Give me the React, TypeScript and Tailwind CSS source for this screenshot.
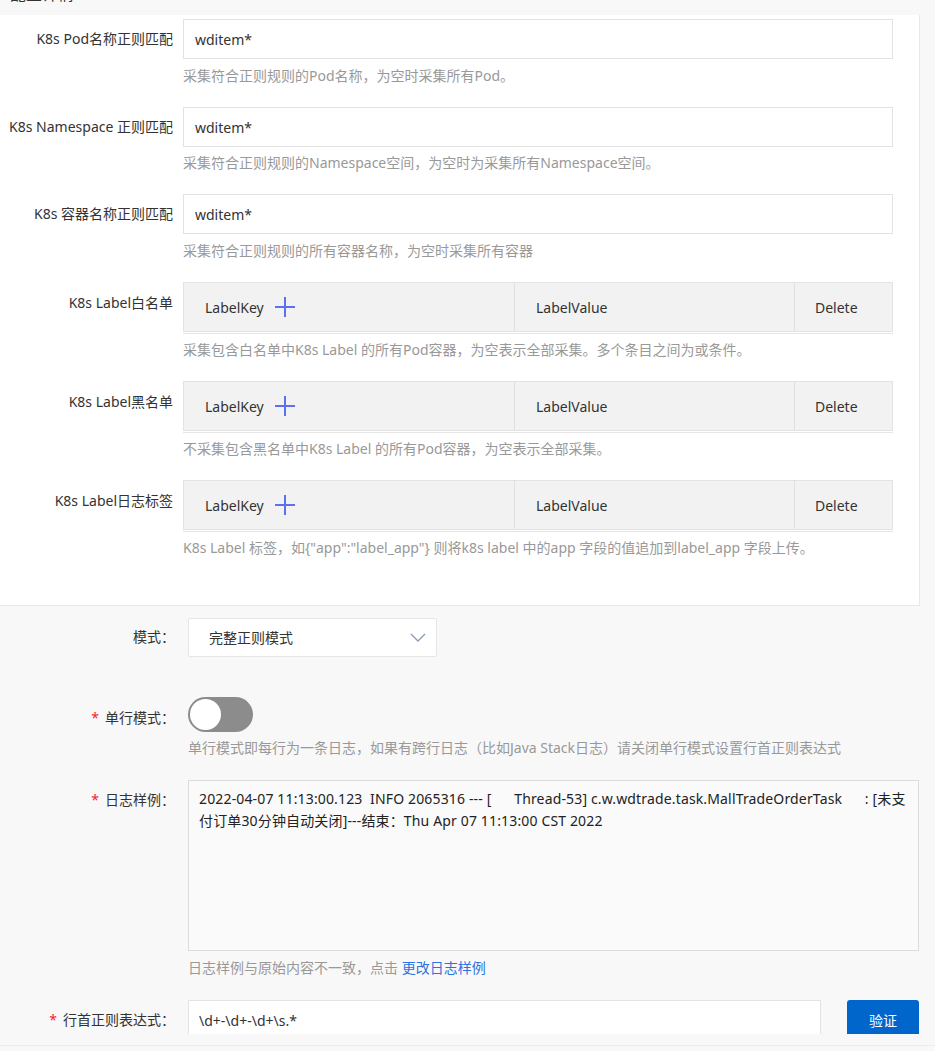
const font = "font-['Noto_Sans','Noto_Sans_CJK_SC',sans-serif]";

type InputRowProps = { label: string; value: string; help: string; helpMt?: string };

function InputRow({ label, value, help, helpMt = "mt-[5px]" }: InputRowProps) {
  return (
    <div className="flex items-start">
      <div className="w-[173px] shrink-0 pt-[9px] text-right text-[14px] leading-[22px] text-[#333]">
        {label}
      </div>
      <div className="ml-[10px] w-[710px]">
        <div className="flex h-[40px] items-center border border-[#e3e3e3] bg-white px-[11px] text-[14px] text-[#333]">
          {value}
        </div>
        <div className={`${helpMt} text-[14px] leading-[22px] text-[#999]`}>{help}</div>
      </div>
    </div>
  );
}

function Plus() {
  return (
    <svg width="22" height="22" viewBox="0 0 22 22" className="ml-[10px]">
      <path d="M11 1v20M1 11h20" stroke="#5b72f0" strokeWidth="2" fill="none" />
    </svg>
  );
}

function LabelTable({ label, help }: { label: string; help: string }) {
  return (
    <div className="flex items-start">
      <div className="w-[173px] shrink-0 pt-[10px] text-right text-[14px] leading-[22px] text-[#333]">
        {label}
      </div>
      <div className="ml-[10px] w-[710px]">
        <div className="flex h-[50px] border border-[#e3e3e3] bg-[#f2f2f2] text-[14px] text-[#333]">
          <div className="flex w-[330px] items-center pl-[21px]">
            LabelKey
            <Plus />
          </div>
          <div className="flex w-[280px] items-center border-l border-[#e0e0e0] pl-[21px]">
            LabelValue
          </div>
          <div className="flex flex-1 items-center border-l border-[#e0e0e0] pl-[20px]">Delete</div>
        </div>
        <div className="mt-px h-px bg-[#e6e6e6]" />
        <div className="mt-[5px] text-[14px] leading-[22px] text-[#999]">{help}</div>
      </div>
    </div>
  );
}

function Label({ text, required, pt }: { text: string; required?: boolean; pt: string }) {
  return (
    <div className={`w-[175px] shrink-0 text-right text-[14px] leading-[22px] text-[#333] ${pt}`}>
      {required && <span className="mr-[6px] text-[#f5222d]">*</span>}
      {text}
    </div>
  );
}

export default function App() {
  return (
    <div className={`h-[1051px] w-[935px] overflow-hidden bg-[#f8f8f8] ${font}`}>
      <div className="h-[1034px] overflow-hidden">
        <div className="h-[15px] overflow-hidden">
          <div className="-mt-[17px] pl-[10px] text-[16px] leading-[22px] text-[#333]">配置详情</div>
        </div>

        <div className="w-[920px] border-r border-b border-[#e8e8e8] bg-white pt-[4px] pb-[46px]">
          <div className="flex flex-col gap-[20px]">
            <InputRow
              label="K8s Pod名称正则匹配"
              value="wditem*"
              help="采集符合正则规则的Pod名称，为空时采集所有Pod。"
              helpMt="mt-[6px]"
            />
            <InputRow
              label="K8s Namespace 正则匹配"
              value="wditem*"
              help="采集符合正则规则的Namespace空间，为空时为采集所有Namespace空间。"
            />
            <InputRow
              label="K8s 容器名称正则匹配"
              value="wditem*"
              help="采集符合正则规则的所有容器名称，为空时采集所有容器"
              helpMt="mt-[6px]"
            />
            <LabelTable label="K8s Label白名单" help="采集包含白名单中K8s Label 的所有Pod容器，为空表示全部采集。多个条目之间为或条件。" />
            <LabelTable label="K8s Label黑名单" help="不采集包含黑名单中K8s Label 的所有Pod容器，为空表示全部采集。" />
            <LabelTable
              label="K8s Label日志标签"
              help={'K8s Label 标签，如{"app":"label_app"} 则将k8s label 中的app 字段的值追加到label_app 字段上传。'}
            />
          </div>
        </div>

        <div className="pt-[12px]">
          <div className="flex items-start">
            <Label text="模式：" pt="pt-[8px]" />
            <div className="ml-[13px] flex h-[39px] w-[249px] items-center justify-between rounded-[2px] border border-[#e6e6e6] bg-white pl-[20px] pr-[10px] text-[14px] text-[#333]">
              完整正则模式
              <svg width="16" height="10" viewBox="0 0 16 10">
                <path d="M1 1l7 7 7-7" stroke="#8a9bb3" strokeWidth="1.3" fill="none" />
              </svg>
            </div>
          </div>

          <div className="mt-[40px] flex items-start">
            <Label text="单行模式：" required pt="pt-[10px]" />
            <div className="ml-[13px]">
              <div className="flex h-[35px] w-[65px] items-center rounded-full bg-[#8c8c8c] pl-[2px]">
                <div className="h-[31px] w-[31px] rounded-full bg-white" />
              </div>
              <div className="mt-[5px] text-[14px] leading-[22px] text-[#999]">
                单行模式即每行为一条日志，如果有跨行日志（比如Java Stack日志）请关闭单行模式设置行首正则表达式
              </div>
            </div>
          </div>

          <div className="mt-[21px] flex items-start">
            <Label text="日志样例：" required pt="pt-[9px]" />
            <div className="ml-[13px] w-[731px]">
              <div className="h-[171px] border border-[#dcdcdc] bg-[#fafafa] px-[10px] pt-[7px] text-[14px] leading-[22px] tracking-[0.15px] text-[#222]">
                2022-04-07 11:13:00.123&nbsp; INFO 2065316 --- [&nbsp;&nbsp;&nbsp;&nbsp;&nbsp;&nbsp;Thread-53] c.w.wdtrade.task.MallTradeOrderTask&nbsp;&nbsp;&nbsp;&nbsp;&nbsp;&nbsp;: [未支付订单30分钟自动关闭]---结束：Thu Apr 07 11:13:00 CST 2022
              </div>
              <div className="mt-[6px] text-[14px] leading-[22px] text-[#999]">
                日志样例与原始内容不一致，点击 <span className="text-[#2b73e0]">更改日志样例</span>
              </div>
            </div>
          </div>

          <div className="mt-[21px] flex items-start">
            <Label text="行首正则表达式：" required pt="pt-[9px]" />
            <div className="ml-[13px] flex h-[40px] w-[633px] items-center border border-[#e3e3e3] bg-white px-[10px] text-[14px] text-[#333]">
              \d+-\d+-\d+\s.*
            </div>
            <button className="ml-[26px] h-[40px] w-[72px] rounded-[3px] bg-[#0066cc] text-[14px] text-white">
              验证
            </button>
          </div>
        </div>
      </div>
      <div className="h-[12px] border-b border-[#ececec] bg-[#f8f8f8]" />
    </div>
  );
}
